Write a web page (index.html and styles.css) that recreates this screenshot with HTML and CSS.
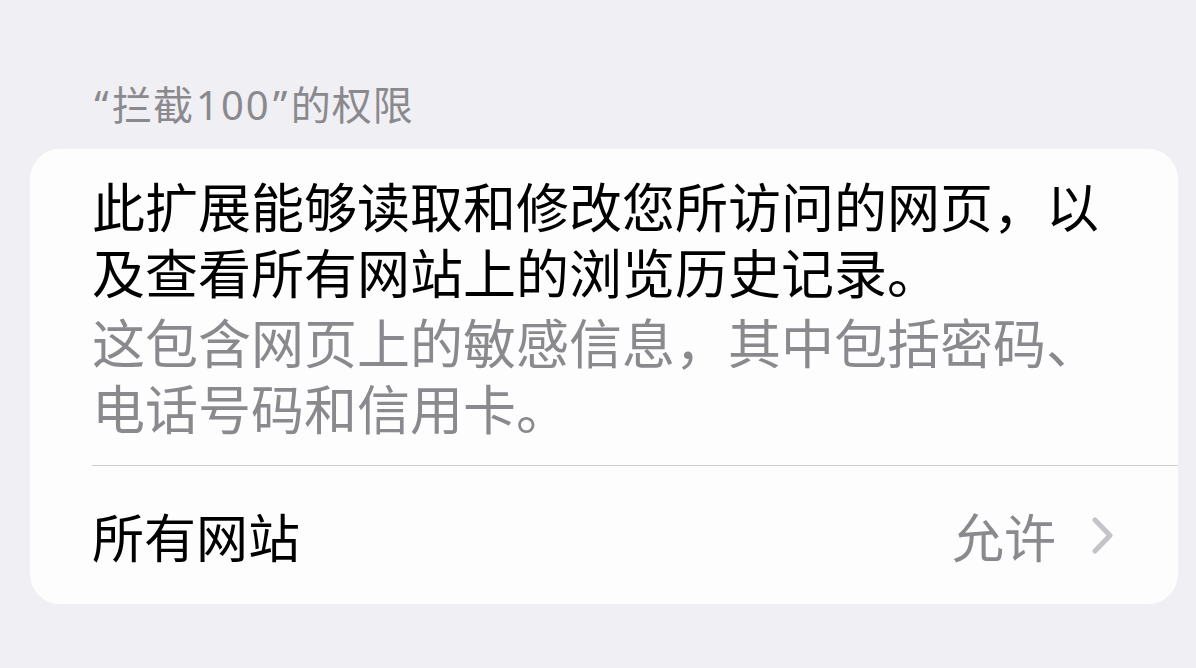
FILE: index.html
```html
<!DOCTYPE html>
<html lang="zh-CN">
<head>
<meta charset="utf-8">
<link rel="stylesheet" href="styles.css">
</head>
<body>
<div class="page">
  <div class="section-title"><span class="q">“</span>拦截<span class="num">100</span><span class="q">”</span>的权限</div>
  <div class="card">
    <div class="desc">
      <p class="primary">此扩展能够读取和修改您所访问的网页，以及查看所有网站上的浏览历史记录。</p>
      <p class="secondary">这包含网页上的敏感信息，其中包括密码、电话号码和信用卡。</p>
    </div>
    <div class="row">
      <span class="row-label">所有网站</span>
      <span class="row-value">允许</span>
      <svg class="chevron" width="22" height="37" viewBox="0 0 22 37"><path d="M3 3 L18 18.5 L3 34" fill="none" stroke="#c4c3c8" stroke-width="5" stroke-linecap="round" stroke-linejoin="round"/></svg>
    </div>
  </div>
</div>
</body>
</html>
```
FILE: styles.css
```css
html, body {
  margin: 0;
  padding: 0;
}
body {
  background: #f0eff4;
  font-family: "Noto Sans CJK SC", "Noto Sans", sans-serif;
  width: 1196px;
  height: 668px;
  overflow: hidden;
}
.page {
  padding: 78px 18px 0 30px;
}
.section-title {
  font-size: 40px;
  line-height: 50px;
  color: #8a898e;
  padding-left: 62px;
  margin-bottom: 19px;
  letter-spacing: 1px;
}
.section-title .q,
.section-title .num {
  font-family: "Noto Sans", sans-serif;
}
.section-title .q {
  display: inline-block;
  width: 20px;
  text-align: center;
}
.section-title .num {
  letter-spacing: 2px;
  margin-left: 2px;
}
.card {
  background: #fdfdfe;
  border-radius: 30px;
  overflow: hidden;
}
.desc {
  padding: 23px 62px 25px 0;
  border-bottom: 1px solid #cfcdd1;
  margin-left: 62px;
}
.desc p {
  margin: 0;
  font-size: 53px;
  line-height: 66px;
}
.primary {
  color: #000;
}
.desc .secondary {
  color: #8a898e;
  margin-top: 4px;
}
.row {
  display: flex;
  align-items: center;
  height: 138px;
  padding: 0 64px 0 62px;
}
.row-label {
  font-size: 52px;
  color: #000;
  flex: 1;
}
.row-value {
  font-size: 52px;
  color: #8a898e;
  margin-right: 36px;
}
.chevron {
  display: block;
}
```
